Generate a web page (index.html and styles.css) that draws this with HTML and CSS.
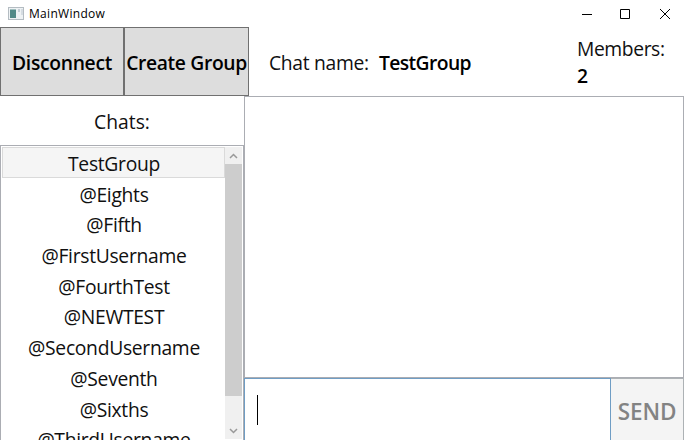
FILE: index.html
```
<!DOCTYPE html>
<html lang="en">
<head>
<meta charset="utf-8">
<title>MainWindow</title>
<link rel="stylesheet" href="styles.css">
</head>
<body>
<div class="window">
  <header class="titlebar">
    <svg class="app-icon" width="16" height="14" viewBox="0 0 16 14">
      <rect x=".5" y=".5" width="15" height="12" fill="#eef2f4" stroke="#b4bcc2"/>
      <rect x="2" y="2.500" width="6" height="8.500" fill="#528a88"/>
      <rect x="10" y="2" width="2" height="3" fill="#c5ced6"/>
      <rect x="13" y="2" width="2" height="6" fill="#d5dce2"/>
    </svg>
    <span class="title">MainWindow</span>
    <svg class="controls" width="90" height="12" viewBox="0 0 90 12" fill="none" stroke="#000">
      <path d="M0 6.5H10M38.500 1.500h9v9h-9zM78 1l10 10M88 1l-10 10"/>
    </svg>
  </header>
  <div class="toolbar">
    <button class="tool disconnect"><span>Disconnect</span></button>
    <button class="tool create"><span>Create Group</span></button>
    <div class="chat-label">Chat name:</div>
    <div class="chat-name">TestGroup</div>
    <div class="members"><div>Members:</div><b>2</b></div>
  </div>
  <div class="main">
    <aside class="sidebar">
      <div class="heading">Chats:</div>
      <div class="list">
        <ul class="items">
          <li class="selected">TestGroup</li>
          <li>@Eights</li>
          <li>@Fifth</li>
          <li>@FirstUsername</li>
          <li>@FourthTest</li>
          <li>@NEWTEST</li>
          <li>@SecondUsername</li>
          <li>@Seventh</li>
          <li>@Sixths</li>
          <li>@ThirdUsername</li>
        </ul>
        <div class="scrollbar">
          <svg width="17" height="17" viewBox="0 0 17 17"><path d="M5 11 8.500 7.500 12 11"/></svg>
          <div class="thumb"></div>
          <svg class="down" width="17" height="17" viewBox="0 0 17 17"><path d="M5 7 8.500 10.500 12 7"/></svg>
        </div>
      </div>
    </aside>
    <section class="chat">
      <div class="messages"></div>
      <div class="composer">
        <div class="input"><span class="caret"></span></div>
        <button class="send">SEND</button>
      </div>
    </section>
  </div>
</div>
</body>
</html>
```
FILE: styles.css
```
* { box-sizing: border-box; }
body {
  margin: 0;
  overflow: hidden;
  background: #fff;
  color: #101010;
  font: 19.3px/26.6px "Open Sans", "Noto Sans", sans-serif;
  letter-spacing: -.3px;
}
button { font: inherit; letter-spacing: inherit; color: #000; padding: 0; white-space: nowrap; }
.window { width: 684px; height: 440px; display: flex; flex-direction: column; overflow: hidden; }
.titlebar { height: 27px; flex: none; display: flex; align-items: center; padding: 0 12px 0 8px; }
.title { font-size: 12px; line-height: 16px; letter-spacing: .3px; margin-left: 5px; color: #000; }
.controls { margin-left: auto; }
.toolbar { height: 69px; flex: none; display: flex; align-items: center; white-space: nowrap; }
.tool {
  height: 69px;
  display: flex;
  align-items: center;
  justify-content: center;
  padding-top: 3px;
  background: #ddd;
  border: 1px solid #707070;
  font-weight: 600;
}
.disconnect { width: 124px; }
.create { width: 125px; letter-spacing: -.35px; }
.chat-label { width: 110px; margin-left: 20px; padding-top: 3px; }
.chat-name { font-weight: 600; color: #000; padding-top: 3px; letter-spacing: -.6px; }
.members { margin-left: auto; width: 107px; padding-top: 3px; letter-spacing: -.4px; }
.members b { display: block; font-weight: 600; color: #000; }
.main { flex: 1; display: flex; min-height: 0; }
.sidebar { width: 244px; flex: none; display: flex; flex-direction: column; }
.heading { height: 49px; flex: none; text-align: center; padding-top: 13px; letter-spacing: 0; }
.list { height: 310px; flex: none; display: flex; border: 1px solid #abadb3; padding: 1px; }
.items { list-style: none; margin: 0; padding: 0; width: 223px; }
.items li { height: 30.7px; padding: 4px 0 0 1px; text-align: center; }
.items .selected { background: #f5f5f5; box-shadow: inset 0 0 0 1px #dadada; }
.scrollbar { width: 17px; height: 292px; background: #f0f0f0; display: flex; flex-direction: column; }
.scrollbar svg { display: block; flex: none; fill: none; stroke: #999; stroke-width: 1.5; }
.scrollbar .down { margin-top: auto; }
.thumb { height: 232px; background: #cdcdcd; }
.chat { flex: 1; display: flex; flex-direction: column; }
.messages { height: 282px; flex: none; border: 1px solid #abadb3; }
.composer { flex: 1; display: flex; }
.input { width: 367px; border: 1px solid #6f9dc4; border-bottom: 0; padding: 16px 0 0 12px; }
.caret { display: block; width: 1px; height: 30px; background: #000; }
.send {
  flex: 1;
  background: #f4f4f4;
  border: 1px solid #adb2b5;
  border-width: 1px 1px 0 0;
  color: #838383;
  font-size: 22.5px;
  font-weight: 600;
  padding-top: 5px;
  letter-spacing: -.1px;
}
```
